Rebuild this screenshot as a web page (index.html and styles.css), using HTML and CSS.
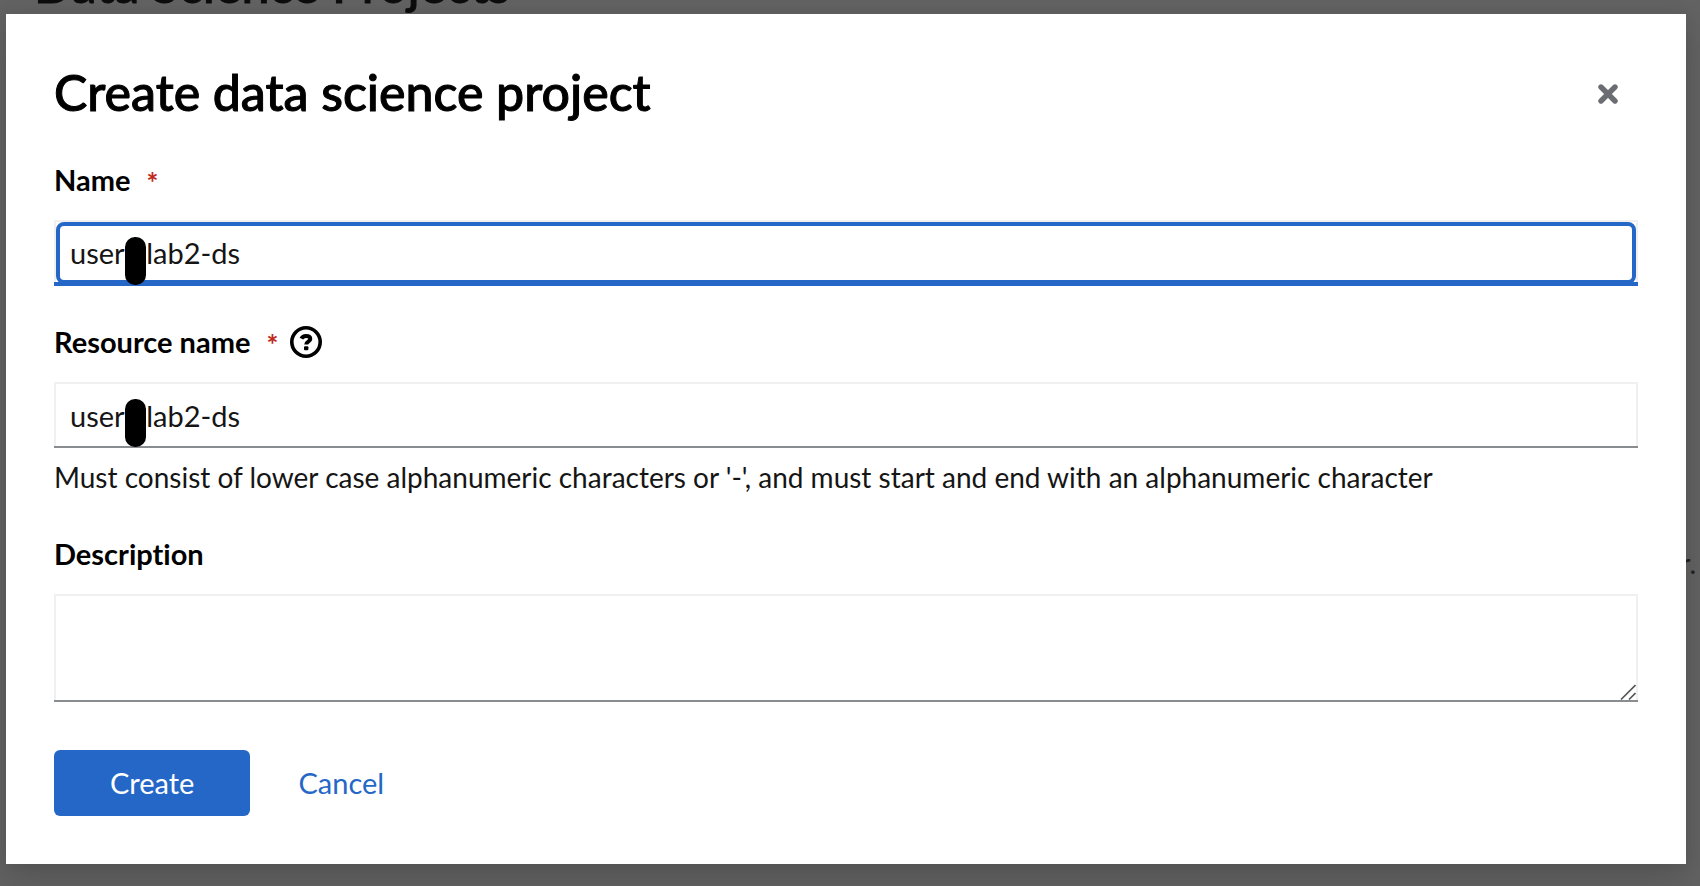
FILE: index.html
```html
<!DOCTYPE html>
<html lang="en">
<head>
<meta charset="utf-8">
<title>Create data science project</title>
<link rel="stylesheet" href="styles.css">
</head>
<body>
<main class="page" aria-hidden="true">
  <h1 class="page-title">Data Science Projects</h1>
  <p class="page-text">r.</p>
</main>
<div class="modal" role="dialog" aria-modal="true" aria-labelledby="modal-title">
  <header class="modal-header">
    <h2 class="modal-title" id="modal-title">Create data science project</h2>
    <button class="close" type="button" aria-label="Close">
      <svg width="20" height="20" viewBox="0 0 20 20"><path d="M3 3 17 17M17 3 3 17" fill="none" stroke="currentColor" stroke-width="5.4" stroke-linecap="round"/></svg>
    </button>
  </header>
  <form class="form">
    <div class="group">
      <div class="label-row"><label class="label" for="name">Name</label><span class="required">*</span></div>
      <div class="field focused">
        <input class="control" id="name" type="text" value="user&nbsp;&nbsp;&nbsp;lab2-ds">
        <span class="redaction"></span>
      </div>
    </div>
    <div class="group">
      <div class="label-row"><label class="label" for="resource">Resource name</label><span class="required">*</span>
        <button class="help" type="button" aria-label="More info">
          <svg width="32" height="32" viewBox="0 0 32 32" fill="none" stroke="currentColor"><circle cx="16" cy="16" r="14.2" stroke-width="3.6"/><path d="M11.4 12.6C12.3 10.7 13.7 9.9 16 9.9c2.6 0 4.3 1.2 4.3 3.1 0 2.7-4.1 2.6-4.1 5.4" stroke-width="4"/><rect x="14" y="20.2" width="4.4" height="4" rx="1" fill="currentColor" stroke="none"/></svg>
        </button>
      </div>
      <div class="field">
        <input class="control" id="resource" type="text" value="user&nbsp;&nbsp;&nbsp;lab2-ds" aria-describedby="resource-hint">
        <span class="redaction"></span>
      </div>
      <p class="hint" id="resource-hint">Must consist of lower case alphanumeric characters or '-', and must start and end with an alphanumeric character</p>
    </div>
    <div class="group">
      <div class="label-row"><label class="label" for="description">Description</label></div>
      <div class="field">
        <textarea class="control area" id="description"></textarea>
        <svg class="grip" width="16" height="16" viewBox="0 0 16 16"><path d="M1 15.5 15.5 1M9 15.5 15.5 9" fill="none" stroke="#555" stroke-width="1.6"/></svg>
      </div>
    </div>
    <footer class="actions">
      <button class="button primary" type="button">Create</button>
      <button class="button link" type="button">Cancel</button>
    </footer>
  </form>
</div>
</body>
</html>
```
FILE: styles.css
```css
* { box-sizing: border-box; }
body {
  margin: 0;
  min-height: 100vh;
  overflow: hidden;
  background: #626262;
  color: #151515;
  font-family: Lato, "Open Sans", sans-serif;
  font-size: 28px;
  font-variant-ligatures: none;
  line-height: 42px;
}
h1, h2, p { margin: 0; }
button, input, textarea { font: inherit; }
button { border: 0; background: none; padding: 0; cursor: pointer; }
svg { display: block; }

.page { color: #0d0d0d; }
.page-title {
  margin-top: -46px;
  padding-left: 34px;
  font-size: 50px;
  font-weight: 500;
  line-height: 60px;
  -webkit-text-stroke: 1px currentColor;
}
.page-text { margin-top: 528px; padding-right: 4px; text-align: right; color: #222; }

.modal {
  position: absolute;
  top: 14px;
  left: 6px;
  right: 14px;
  padding: 48px;
  background: #fff;
  box-shadow: 0 16px 32px rgba(0, 0, 0, .14), 0 0 12px rgba(0, 0, 0, .06);
}
.modal-header {
  display: flex;
  justify-content: space-between;
  align-items: flex-start;
  margin-bottom: 30px;
}
.modal-title {
  color: #000;
  font-size: 50px;
  font-weight: 500;
  line-height: 60px;
  -webkit-text-stroke: 1px currentColor;
}
.close {
  display: grid;
  place-items: center;
  width: 60px;
  height: 64px;
  color: #6a6e73;
}

.form { display: flex; flex-direction: column; gap: 32px; }
.label-row { display: flex; align-items: center; height: 48px; margin-bottom: 16px; }
.label { color: #000; font-size: 29px; font-weight: 700; }
.required { margin: 4px 12px 0 16px; color: #c0281c; font-weight: 700; }
.help { color: #000; }
.field { position: relative; }
.control {
  display: block;
  width: 100%;
  height: 66px;
  padding: 2px 16px 0;
  border: 0;
  border-bottom: 2px solid #8a8d90;
  border-radius: 0;
  outline: 0;
  background: #fff;
  box-shadow: inset 2px 0 #f0f0f0, inset -2px 0 #f0f0f0, inset 0 2px #f0f0f0;
  color: #151515;
  font-size: 29px;
}
.area { height: 108px; padding: 12px 16px; resize: none; }
.focused .control { border-bottom: 4px solid #2567c6; }
.focused::after {
  content: "";
  position: absolute;
  inset: 2px;
  border: 4px solid #2567c6;
  border-radius: 8px;
  pointer-events: none;
}
.redaction {
  position: absolute;
  z-index: 1;
  top: 17px;
  left: 71px;
  width: 21px;
  height: 48px;
  border-radius: 10px;
  background: #000;
}
.grip { position: absolute; right: 2px; bottom: 2px; pointer-events: none; }
.hint { margin-top: 8px; }

.actions { display: flex; gap: 48px; margin-top: 16px; }
.button { height: 66px; color: #2567c6; font-size: 29px; }
.primary { padding: 0 56px; border-radius: 6px; background: #2567c6; color: #fff; }
```
